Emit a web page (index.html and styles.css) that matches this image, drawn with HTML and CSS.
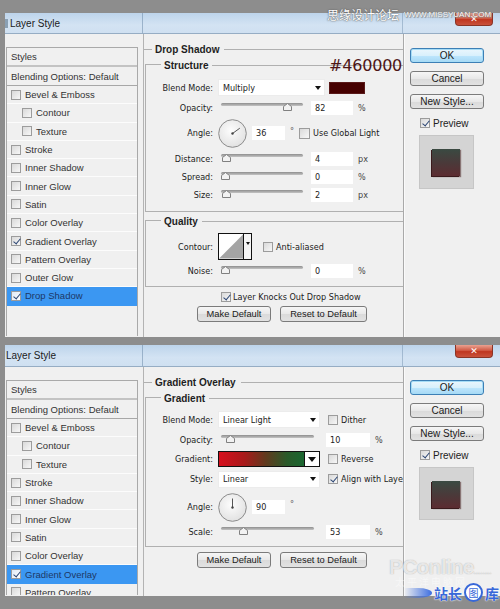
FILE: index.html
```html
<!DOCTYPE html>
<html>
<head>
<meta charset="utf-8">
<link rel="stylesheet" href="styles.css">
</head>
<body>
<div class="page">
  <div class="dialog d1">
    <div class="titlebar"><span class="ticon"></span><span class="title">Layer Style</span><span class="close">✕</span></div>
    <div class="dbody">
      <div class="styles">
        <div class="shead">Styles</div>
        <div class="sblend">Blending Options: Default</div>
        <div class="srow"><span class="cb"></span>Bevel &amp; Emboss</div>
        <div class="srow sub"><span class="cb"></span>Contour</div>
        <div class="srow sub"><span class="cb"></span>Texture</div>
        <div class="srow"><span class="cb"></span>Stroke</div>
        <div class="srow"><span class="cb"></span>Inner Shadow</div>
        <div class="srow"><span class="cb"></span>Inner Glow</div>
        <div class="srow"><span class="cb"></span>Satin</div>
        <div class="srow"><span class="cb"></span>Color Overlay</div>
        <div class="srow"><span class="cb on"></span>Gradient Overlay</div>
        <div class="srow"><span class="cb"></span>Pattern Overlay</div>
        <div class="srow"><span class="cb"></span>Outer Glow</div>
        <div class="srow sel"><span class="cb on"></span>Drop Shadow</div>
      </div>
      <div class="main">
        <div class="ohead"><span>Drop Shadow</span></div>
        <div class="group first">
          <div class="ghead"><span>Structure</span></div>
          <div class="gbody g1">
            <div class="row r-blend"><span class="lbl">Blend Mode:</span><span class="select w1">Multiply<span class="arr"></span></span><span class="swatch"></span></div>
            <div class="row r-op"><span class="lbl">Opacity:</span><span class="slider s1"><span class="thumb" style="--v:0.85"></span></span><span class="inp i1">82</span><span class="unit">%</span></div>
            <div class="row r-angle"><span class="lbl">Angle:</span>
              <svg class="dial" width="29" height="29" viewBox="0 0 29 29"><defs><radialGradient id="dg1" cx="45%" cy="40%" r="60%"><stop offset="0" stop-color="#fdfdfd"/><stop offset="1" stop-color="#e2e2e2"/></radialGradient></defs><circle cx="14.5" cy="14.5" r="13.8" fill="url(#dg1)" stroke="#8c8c8c" stroke-width="1"/><line x1="14.5" y1="14.5" x2="21.8" y2="9.2" stroke="#555" stroke-width="1"/><circle cx="14.5" cy="14.5" r="1.2" fill="#444"/></svg>
              <span class="inp i2">36</span><span class="deg">°</span><span class="cb gl"></span><span class="ctext">Use Global Light</span></div>
            <div class="row r-dist"><span class="lbl">Distance:</span><span class="slider s1"><span class="thumb" style="--v:0.02"></span></span><span class="inp i1">4</span><span class="unit">px</span></div>
            <div class="row r-sp"><span class="lbl">Spread:</span><span class="slider s1"><span class="thumb" style="--v:0"></span></span><span class="inp i1">0</span><span class="unit">%</span></div>
            <div class="row r-sp"><span class="lbl">Size:</span><span class="slider s1"><span class="thumb" style="--v:0.01"></span></span><span class="inp i1">2</span><span class="unit">px</span></div>
          </div>
        </div>
        <div class="group q">
          <div class="ghead"><span>Quality</span></div>
          <div class="gbody g2">
            <div class="row r-cont"><span class="lbl">Contour:</span>
              <span class="contour"><svg width="25" height="25" viewBox="0 0 25 25"><rect width="25" height="25" fill="#fff"/><polygon points="0,25 25,0 25,25" fill="#a4a4a4"/></svg><span class="carr"><span class="tri"></span></span></span>
              <span class="cb aa"></span><span class="ctext">Anti-aliased</span></div>
            <div class="row r-noise"><span class="lbl">Noise:</span><span class="slider s1"><span class="thumb" style="--v:0"></span></span><span class="inp i1">0</span><span class="unit">%</span></div>
          </div>
        </div>
        <div class="knock"><span class="cb on"></span><span class="ctext">Layer Knocks Out Drop Shadow</span></div>
        <div class="btnrow"><span class="btn b-make">Make Default</span><span class="btn b-reset">Reset to Default</span></div>
      </div>
      <div class="side">
        <span class="btn sbtn ok">OK</span>
        <span class="btn sbtn">Cancel</span>
        <span class="btn sbtn">New Style...</span>
        <div class="prev"><span class="cb on"></span><span class="ptext">Preview</span></div>
        <div class="thumbbox"><span class="sq"></span></div>
      </div>
    </div>
    <div class="hexnote">#460000</div>
  </div>

  <div class="dialog d2">
    <div class="titlebar"><span class="title t2">Layer Style</span><span class="close">✕</span></div>
    <div class="dbody">
      <div class="styles">
        <div class="shead">Styles</div>
        <div class="sblend">Blending Options: Default</div>
        <div class="srow"><span class="cb"></span>Bevel &amp; Emboss</div>
        <div class="srow sub"><span class="cb"></span>Contour</div>
        <div class="srow sub"><span class="cb"></span>Texture</div>
        <div class="srow"><span class="cb"></span>Stroke</div>
        <div class="srow"><span class="cb"></span>Inner Shadow</div>
        <div class="srow"><span class="cb"></span>Inner Glow</div>
        <div class="srow"><span class="cb"></span>Satin</div>
        <div class="srow"><span class="cb"></span>Color Overlay</div>
        <div class="srow sel"><span class="cb on"></span>Gradient Overlay</div>
        <div class="srow"><span class="cb"></span>Pattern Overlay</div>
      </div>
      <div class="main">
        <div class="ohead"><span>Gradient Overlay</span></div>
        <div class="group first">
          <div class="ghead"><span>Gradient</span></div>
          <div class="gbody g3">
            <div class="row r-blend"><span class="lbl">Blend Mode:</span><span class="select w2">Linear Light<span class="arr"></span></span><span class="cb c2"></span><span class="ctext">Dither</span></div>
            <div class="row r-op2"><span class="lbl">Opacity:</span><span class="slider s2"><span class="thumb" style="--v:0.06"></span></span><span class="inp i3">10</span><span class="unit">%</span></div>
            <div class="row r-grad"><span class="lbl">Gradient:</span><span class="gradbar"><span class="gfill"></span><span class="garr"><span class="tri big"></span></span></span><span class="cb c2"></span><span class="ctext">Reverse</span></div>
            <div class="row r-style"><span class="lbl">Style:</span><span class="select w2">Linear<span class="arr"></span></span><span class="cb c2 on"></span><span class="ctext">Align with Layer</span></div>
            <div class="row r-angle2"><span class="lbl">Angle:</span>
              <svg class="dial" width="29" height="29" viewBox="0 0 29 29"><defs><radialGradient id="dg2" cx="45%" cy="40%" r="60%"><stop offset="0" stop-color="#fdfdfd"/><stop offset="1" stop-color="#e2e2e2"/></radialGradient></defs><circle cx="14.5" cy="14.5" r="13.8" fill="url(#dg2)" stroke="#8c8c8c" stroke-width="1"/><line x1="14.5" y1="14.5" x2="14.5" y2="5.5" stroke="#555" stroke-width="1"/><circle cx="14.5" cy="14.5" r="1.2" fill="#444"/></svg>
              <span class="inp i2">90</span><span class="deg">°</span></div>
            <div class="row r-scale"><span class="lbl">Scale:</span><span class="slider s2"><span class="thumb" style="--v:0.21"></span></span><span class="inp i3">53</span><span class="unit">%</span></div>
          </div>
        </div>
        <div class="btnrow b2"><span class="btn b-make">Make Default</span><span class="btn b-reset">Reset to Default</span></div>
      </div>
      <div class="side s2side">
        <span class="btn sbtn ok">OK</span>
        <span class="btn sbtn">Cancel</span>
        <span class="btn sbtn">New Style...</span>
        <div class="prev"><span class="cb on"></span><span class="ptext">Preview</span></div>
        <div class="thumbbox"><span class="sq"></span></div>
      </div>
    </div>
  </div>
</div>

<div class="wm-top"><span class="wm-cn">思缘设计论坛</span><span class="wm-url">WWW.MISSYUAN.COM</span></div>
<div class="wm-pc">
  <div class="pc-name">PConline<span class="pc-dots">........</span></div>
  <div class="pc-sub">太平洋电脑网</div>
</div>
<div class="wm-zz"><span class="swoosh"></span><span class="zz">站长</span><span class="zzc">图</span><span class="zz">库</span></div>
</body>
</html>
```

FILE: styles.css
```css
* { box-sizing: border-box; }
html, body { margin: 0; }
body {
  width: 500px;
  height: 609px;
  overflow: hidden;
  position: relative;
  background: #8d8d8d;
  font-family: "DejaVu Sans Condensed", "DejaVu Sans", sans-serif;
  font-size: 9px;
  color: #222;
}
.page {
  padding: 13px 0 0 5px;
  display: flex;
  flex-direction: column;
  gap: 8px;
}
.dialog {
  width: 495px;
  background: #f0f0f0;
  display: flex;
  flex-direction: column;
  position: relative;
}
.d1 { height: 324px; }
.d2 { height: 251px; }

/* title bar */
.titlebar {
  height: 21px;
  flex: none;
  display: flex;
  align-items: center;
  background:
    linear-gradient(to right, transparent 137px, rgba(110,140,170,.55) 137px, rgba(110,140,170,.55) 138px, transparent 138px, transparent 397px, rgba(110,140,170,.45) 397px, rgba(110,140,170,.45) 398px, transparent 398px),
    linear-gradient(#bdd4eb, #d3e3f3 60%, #cfe0f1);
  border-bottom: 1px solid #96adc4;
}
.d2 .titlebar { height: 22px; }
.ticon {
  width: 3px;
  height: 9px;
  background: #8aa0b4;
}
.title {
  margin-left: 2px;
  font-family: "Liberation Sans", Arial, sans-serif;
  font-size: 10px;
  color: #1b1b1b;
}
.title.t2 { margin-left: 1px; }
.close {
  margin-left: auto;
  margin-right: 7px;
  align-self: flex-start;
  width: 38px;
  height: 13px;
  background: linear-gradient(#eaa291, #d15a45 45%, #bf3620 55%, #c9523c);
  border: 1px solid #8a3426;
  border-top: none;
  border-radius: 0 0 4px 4px;
  color: #fff;
  font-family: "DejaVu Sans", sans-serif;
  font-size: 9px;
  font-weight: bold;
  display: flex;
  align-items: center;
  justify-content: center;
  line-height: 1;
}

.dbody {
  flex: 1;
  display: flex;
  min-height: 0;
}

/* styles list */
.styles {
  width: 132px;
  flex: none;
  margin: 13px 0 1px 1px;
  border: 1px solid #a9a9a9;
  border-bottom: none;
  background: #f0f0f0;
  overflow: hidden;
  color: #333;
  font-family: "Liberation Sans", Arial, sans-serif;
  font-size: 9.5px;
}
.shead {
  height: 19px;
  border-bottom: 2px solid #c3c3c3;
  padding-left: 4px;
  display: flex;
  align-items: center;
}
.sblend {
  height: 19px;
  border-bottom: 1px solid #a7a7a7;
  padding-left: 4px;
  display: flex;
  align-items: center;
}
.srow {
  height: 18.3px;
  border-bottom: 1px solid #fcfcfc;
  padding-left: 4px;
  display: flex;
  align-items: center;
  gap: 4px;
}
.srow.sub { padding-left: 15px; }
.srow.sel {
  background: #3b97f2;
  color: #1d3766;
  border-bottom-color: #3b97f2;
}

/* checkbox */
.cb {
  width: 10px;
  height: 10px;
  flex: none;
  border: 1px solid #9c9c9c;
  background: linear-gradient(135deg, #d9d9d9, #f7f7f7);
  position: relative;
}
.cb.on::after {
  content: "";
  position: absolute;
  left: 2.5px;
  top: 0px;
  width: 3px;
  height: 6px;
  border: solid #2c4674;
  border-width: 0 1.5px 1.5px 0;
  transform: rotate(40deg);
}
.sel .cb { background: linear-gradient(135deg, #dfe9f5, #ffffff); }

/* main column */
.main {
  width: 260px;
  flex: none;
  margin-left: 5px;
  border-left: 1px solid #b3b3b3;
  display: flex;
  flex-direction: column;
  overflow: hidden;
}
.ohead, .ghead {
  font-family: "Liberation Sans", Arial, sans-serif;
  font-size: 10px;
  font-weight: bold;
  color: #1e1e1e;
}
.ohead {
  margin-top: 8px;
  height: 14px;
  display: flex;
  align-items: center;
}
.ohead::before {
  content: "";
  width: 8px;
  height: 1px;
  background: #b0b0b0;
  margin-right: 3px;
}
.ohead::after {
  content: "";
  flex: 1;
  height: 1px;
  background: #b0b0b0;
  margin-left: 5px;
}
.group { margin-left: 1px; }
.group.first { margin-top: 2px; }
.group.q { margin-top: 2px; }
.ghead {
  height: 14px;
  display: flex;
  align-items: center;
}
.ghead::before {
  content: "";
  width: 15px;
  height: 7px;
  align-self: flex-end;
  border-top: 1px solid #b0b0b0;
  border-left: 1px solid #b0b0b0;
  margin-right: 3px;
}
.ghead::after {
  content: "";
  flex: 1;
  height: 1px;
  background: #b0b0b0;
  margin-left: 4px;
}
.gbody {
  border-left: 1px solid #b0b0b0;
  border-bottom: 1px solid #b0b0b0;
  display: flex;
  flex-direction: column;
}
.g1 { padding: 7px 0 8px; }
.g2 { padding: 5px 0 7px; }
.g3 { padding: 6px 0 6px; }

.row {
  display: flex;
  align-items: center;
  height: 16px;
}
.lbl {
  width: 67px;
  text-align: right;
  margin-right: 5px;
  flex: none;
  color: #222;
}
.r-blend { height: 17px; }
.r-op { margin-top: 4px; }
.r-angle { height: 32px; margin-top: 1px; }
.r-dist { margin-top: 2px; }
.r-sp { margin-top: 2px; }
.r-cont { height: 27px; }
.r-noise { margin-top: 3px; }
.r-op2 { margin-top: 4px; }
.r-grad { margin-top: 3px; }
.r-style { margin-top: 4px; }
.r-angle2 { height: 32px; margin-top: 4px; }
.r-scale { margin-top: 1px; }

.select {
  height: 17px;
  background: #fff;
  border: 1px solid #ececec;
  display: flex;
  align-items: center;
  padding-left: 4px;
  flex: none;
}
.w1 { width: 107px; }
.w2 { width: 102px; }
.arr {
  margin-left: auto;
  margin-right: 3px;
  width: 0;
  height: 0;
  border-left: 3.5px solid transparent;
  border-right: 3.5px solid transparent;
  border-top: 4px solid #111;
}
.swatch {
  width: 36px;
  height: 12px;
  margin-left: 4px;
  background: #460000;
  border: 1px solid #5a1a1a;
}

.slider {
  position: relative;
  height: 12px;
  margin-left: 3px;
  flex: none;
}
.slider::before {
  content: "";
  position: absolute;
  left: 0;
  right: 0;
  top: 1px;
  height: 3px;
  border-radius: 2px;
  background: linear-gradient(#8e8e8e, #c4c4c4);
}
.s1 { width: 82px; margin-right: 8px; }
.s2 { width: 93px; margin-right: 12px; }
.thumb {
  position: absolute;
  top: 1px;
  left: calc(var(--v) * (100% - 9px));
  width: 9px;
  height: 8px;
  background: url("data:image/svg+xml;utf8,<svg xmlns='http://www.w3.org/2000/svg' width='9' height='8' viewBox='0 0 9 8'><polygon points='0.5,7.5 0.5,3.5 4.5,0.5 8.5,3.5 8.5,7.5' fill='%23f2f2f2' stroke='%23808080' stroke-width='1'/></svg>") no-repeat;
}
.inp {
  height: 14px;
  background: #fff;
  display: flex;
  align-items: center;
  padding-left: 4px;
  flex: none;
  color: #222;
}
.i1 { width: 42px; }
.i2 { width: 33px; margin-left: 5px; }
.i3 { width: 44px; }
.unit { margin-left: 5px; color: #444; }
.deg { margin-left: 5px; align-self: flex-start; margin-top: 9px; font-size: 9px; color: #555; }
.r-angle2 .deg { margin-top: 8px; }
.cb.gl { margin-left: 5px; width: 11px; height: 11px; }
.ctext { margin-left: 3px; white-space: nowrap; color: #222; }
.dial { flex: none; }

.contour {
  width: 34px;
  height: 27px;
  border: 1px solid #111;
  display: flex;
  flex: none;
  background: #fff;
}
.contour svg { display: block; }
.carr {
  width: 8px;
  border-left: 1px solid #111;
  display: flex;
  justify-content: center;
  padding-top: 8px;
  background: #f4f4f4;
}
.tri {
  width: 0;
  height: 0;
  border-left: 2.5px solid transparent;
  border-right: 2.5px solid transparent;
  border-top: 3px solid #111;
}
.tri.big {
  border-left-width: 4px;
  border-right-width: 4px;
  border-top-width: 5px;
}
.cb.aa { margin-left: 11px; }

.knock {
  margin-top: 4px;
  height: 12px;
  padding-left: 77px;
  display: flex;
  align-items: center;
}
.knock .ctext { margin-left: 2px; }
.btnrow {
  margin-top: 3px;
  padding-left: 53px;
  display: flex;
  gap: 9px;
}
.btnrow.b2 { margin-top: 5px; }
.btn {
  height: 16px;
  border: 1px solid #7b7b7b;
  border-radius: 3px;
  background: linear-gradient(#f6f6f6, #e8e8e8 50%, #dadada 51%, #e2e2e2);
  display: flex;
  align-items: center;
  justify-content: center;
  color: #1a1a1a;
  flex: none;
  font-family: "Liberation Sans", Arial, sans-serif;
  font-size: 9.3px;
}
.b-make { width: 74px; }
.b-reset { width: 87px; }

.gradbar {
  width: 102px;
  height: 16px;
  border: 1px solid #111;
  display: flex;
  flex: none;
}
.gfill {
  flex: 1;
  background: linear-gradient(to right, #d70f1d, #a81a1a 30%, #603a1e 55%, #2a5a2a 80%, #1a6630);
  border-right: 1px solid #111;
}
.garr {
  width: 14px;
  background: #fff;
  display: flex;
  align-items: center;
  justify-content: center;
}
.cb.c2 { margin-left: 8px; }

/* side */
.side {
  flex: 1;
  border-left: 1px solid #a9a9a9;
  box-shadow: inset 1px 0 0 #fafafa;
  padding-left: 6px;
  padding-top: 14px;
  display: flex;
  flex-direction: column;
  align-items: flex-start;
}
.s2side { padding-top: 13px; }
.sbtn {
  width: 74px;
  height: 15px;
  margin-bottom: 8px;
  font-size: 10px;
}
.sbtn.ok {
  border-color: #3d7fb5;
  box-shadow: inset 0 0 0 1px #a6dcf6;
  background: linear-gradient(#eaf6fd, #d9f0fc 50%, #bee6fd 51%, #a7d9f5);
}
.prev {
  height: 12px;
  margin-left: 10px;
  display: flex;
  align-items: center;
}
.ptext {
  margin-left: 3px;
  font-family: "Liberation Sans", Arial, sans-serif;
  font-size: 10px;
  color: #222;
}
.thumbbox {
  margin-top: 6px;
  margin-left: 9px;
  width: 55px;
  height: 54px;
  background: #d4d4d4;
  border: 1px solid #c6c6c6;
  display: flex;
  align-items: center;
  justify-content: center;
}
.s2side .thumbbox { height: 53px; }
.sq {
  width: 28px;
  height: 27px;
  margin-left: -2px;
  margin-top: 1px;
  background: linear-gradient(#3a4a42, #4a3a3a 50%, #5c2c31);
  box-shadow: -1px 1px 0 #3a1a1c, 1px 1px 1px rgba(60,20,20,.5);
}

/* annotation */
.hexnote {
  position: absolute;
  left: 324px;
  top: 43px;
  font-family: "DejaVu Sans", sans-serif;
  font-size: 16px;
  color: #4d1515;
  letter-spacing: -0.2px;
}

/* watermarks */
.wm-top {
  position: absolute;
  left: 327px;
  top: 6px;
  display: flex;
  align-items: center;
  gap: 5px;
  color: #fff;
  white-space: nowrap;
}
.wm-cn {
  font-family: "Noto Sans CJK SC", sans-serif;
  font-size: 12px;
  text-shadow: 0 0 1px #555, 0 0 2px #666;
}
.wm-url {
  font-family: "Liberation Sans", Arial, sans-serif;
  font-size: 8px;
  text-shadow: 0 0 1px #666, 1px 1px 1px #888;
}
.wm-pc {
  position: absolute;
  left: 389px;
  top: 555px;
  color: rgba(255,255,255,.75);
}
.pc-name {
  font-family: "Liberation Sans", Arial, sans-serif;
  font-size: 21px;
  font-weight: bold;
  letter-spacing: -0.8px;
  text-shadow: 0 0 1px rgba(120,120,120,.7);
  white-space: nowrap;
}
.pc-dots { font-size: 8px; letter-spacing: 0; color: rgba(255,255,255,.6); }
.pc-sub {
  font-family: "Noto Sans CJK SC", sans-serif;
  font-size: 10px;
  margin-top: -5px;
  margin-left: 6px;
  letter-spacing: 2px;
  color: rgba(255,255,255,.45);
}
.wm-zz {
  position: absolute;
  left: 404px;
  top: 583px;
  display: flex;
  align-items: center;
  white-space: nowrap;
}
.swoosh {
  width: 28px;
  height: 10px;
  border-radius: 0 50% 50% 0;
  background: linear-gradient(to right, rgba(70,110,220,0), #3d6ee0);
  margin-right: 2px;
}
.zz {
  font-family: "Noto Sans CJK SC", sans-serif;
  font-size: 14px;
  font-weight: bold;
  color: #3868d8;
  text-shadow: 0 0 2px #fff, 0 0 1px #fff;
  line-height: 1;
}
.zzc {
  width: 19px;
  height: 19px;
  border-radius: 50%;
  border: 2px solid #3868d8;
  background: #fff;
  color: #3868d8;
  font-family: "Noto Sans CJK SC", sans-serif;
  font-size: 10px;
  display: flex;
  align-items: center;
  justify-content: center;
  margin: 0 2px;
}
```
